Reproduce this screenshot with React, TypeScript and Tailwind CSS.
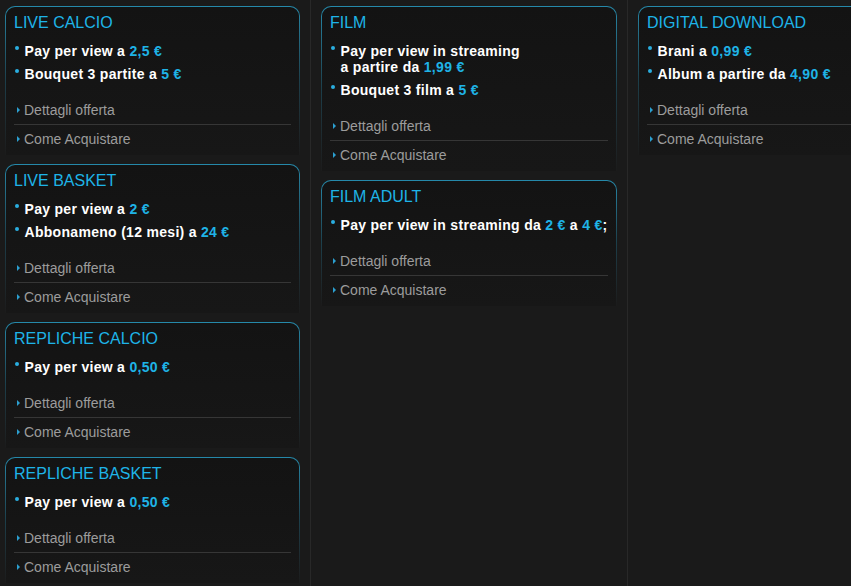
type Part = { text: string; price?: boolean };

type Offer = {
	title: string;
	items: Part[][][];
};

const columns: Offer[][] = [
	[
		{
			title: 'LIVE CALCIO',
			items: [
				[[{ text: 'Pay per view a ' }, { text: '2,5 €', price: true }]],
				[[{ text: 'Bouquet 3 partite a ' }, { text: '5 €', price: true }]],
			],
		},
		{
			title: 'LIVE BASKET',
			items: [
				[[{ text: 'Pay per view a ' }, { text: '2 €', price: true }]],
				[[{ text: 'Abbonameno (12 mesi) a ' }, { text: '24 €', price: true }]],
			],
		},
		{
			title: 'REPLICHE CALCIO',
			items: [[[{ text: 'Pay per view a ' }, { text: '0,50 €', price: true }]]],
		},
		{
			title: 'REPLICHE BASKET',
			items: [[[{ text: 'Pay per view a ' }, { text: '0,50 €', price: true }]]],
		},
	],
	[
		{
			title: 'FILM',
			items: [
				[
					[{ text: 'Pay per view in streaming' }],
					[{ text: 'a partire da ' }, { text: '1,99 €', price: true }],
				],
				[[{ text: 'Bouquet 3 film a ' }, { text: '5 €', price: true }]],
			],
		},
		{
			title: 'FILM ADULT',
			items: [
				[
					[
						{ text: 'Pay per view in streaming da ' },
						{ text: '2 €', price: true },
						{ text: ' a ' },
						{ text: '4 €', price: true },
						{ text: ';' },
					],
				],
			],
		},
	],
	[
		{
			title: 'DIGITAL DOWNLOAD',
			items: [
				[[{ text: 'Brani a ' }, { text: '0,99 €', price: true }]],
				[[{ text: 'Album a partire da ' }, { text: '4,90 €', price: true }]],
			],
		},
	],
];

const columnWidths = ['w-[316px]', 'w-[317px]', 'w-[317px]'];

function LinkRow({ label, divider }: { label: string; divider?: boolean }) {
	return (
		<div
			className={
				divider
					? 'flex items-center border-b border-[#363636] pb-[6px]'
					: 'flex items-center pt-[6px]'
			}
		>
			<span className="ml-[3px] mr-[4px] h-0 w-0 border-y-[3px] border-l-[3px] border-y-transparent border-l-[#2b9fd0]" />
			<span className="text-[14px] leading-[16px] text-[#9c9c9c]">{label}</span>
		</div>
	);
}

function OfferCard({ offer }: { offer: Offer }) {
	return (
		<div className="rounded-t-[10px] bg-linear-to-b from-[#2589aa] via-[#1c3f4b] to-[#1b1b1b] px-px pt-px">
			<div className="rounded-t-[9px] bg-linear-to-b from-[#131313] to-[#171717] px-[8px] pt-[7px] pb-[8px]">
				<h2 className="text-[16px] leading-[18px] text-[#1eb4e8]">{offer.title}</h2>

				<ul className="mt-[11px] flex flex-col gap-[7px]">
					{offer.items.map((lines, i) => (
						<li key={i} className="flex">
							<span className="ml-px mt-[3px] mr-[6px] size-[3.5px] shrink-0 rounded-full bg-[#2aaee0]" />
							<div className="flex flex-col">
								{lines.map((line, j) => (
									<span
										key={j}
										className="whitespace-nowrap text-[14px] font-bold leading-[16px] tracking-[0.3px] text-white"
									>
										{line.map((part, k) => (
											<span key={k} className={part.price ? 'text-[#1fb3e6]' : undefined}>
												{part.text}
											</span>
										))}
									</span>
								))}
							</div>
						</li>
					))}
				</ul>

				<div className="mt-[20px]">
					<LinkRow label="Dettagli offerta" divider />
					<LinkRow label="Come Acquistare" />
				</div>
			</div>
		</div>
	);
}

export default function App() {
	return (
		<div className="h-[586px] w-[851px] overflow-hidden bg-[#1a1a1a] font-['Liberation_Sans',Arial,sans-serif]">
			<div className="ml-[-5px] flex h-full">
				{columns.map((offers, i) => (
					<div
						key={i}
						className={`${columnWidths[i]} flex h-full shrink-0 flex-col gap-[9px] border-r border-[#282828] px-[10px] pt-[6px]`}
					>
						{offers.map((offer) => (
							<OfferCard key={offer.title} offer={offer} />
						))}
					</div>
				))}
			</div>
		</div>
	);
}
